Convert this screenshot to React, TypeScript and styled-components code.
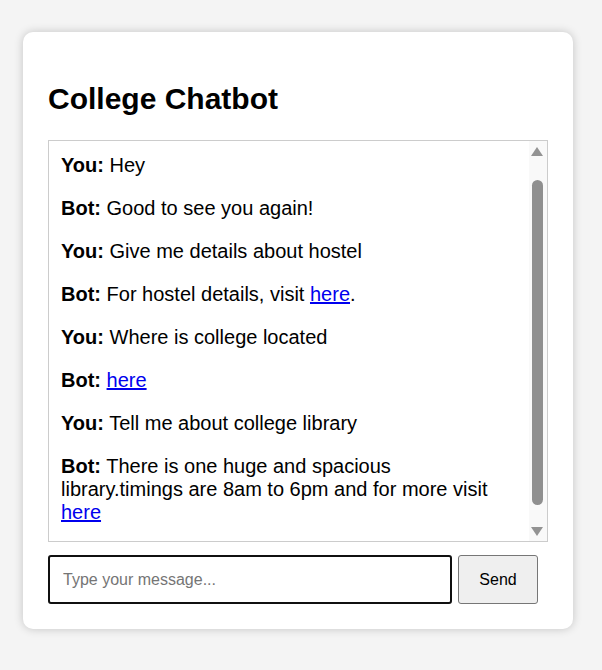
import React, { useLayoutEffect, useRef } from "react";
import styled, { createGlobalStyle } from "styled-components";

const GlobalStyle = createGlobalStyle`
  html, body {
    margin: 0;
    padding: 0;
    background: #f4f4f4;
    font-family: "Liberation Sans", Arial, sans-serif;
  }
`;

const Page = styled.div`
  min-height: 670px;
  padding-top: 32px;
  box-sizing: border-box;
`;

const Card = styled.div`
  width: 550px;
  box-sizing: border-box;
  margin-left: 23px;
  padding: 25px;
  background: #fff;
  border-radius: 10px;
  box-shadow: 0 0 10px rgba(0, 0, 0, 0.2);
`;

const Title = styled.h2`
  margin: 25px 0 24px;
  font-size: 30px;
  line-height: 34px;
  font-weight: bold;
  color: #000;
`;

const ChatBox = styled.div`
  display: flex;
  height: 402px;
  box-sizing: border-box;
  border: 1px solid #ccc;
  margin-bottom: 13px;
`;

const MessageList = styled.div`
  flex: 1;
  overflow: hidden;
  padding: 10px 12px 10px 12px;
  font-size: 20px;
  color: #000;
`;

const Message = styled.p`
  margin: 20px 0;
  line-height: 23px;

  a {
    color: #0000ee;
  }
`;

const ScrollBar = styled.div`
  width: 18px;
  display: flex;
  flex-direction: column;
  background: #f9f9f9;
`;

const Arrow = styled.div<{ $down?: boolean }>`
  height: 20px;
  display: flex;
  align-items: center;
  padding-left: 2px;

  &::before {
    content: "";
    width: 0;
    height: 0;
    border-left: 6.5px solid transparent;
    border-right: 6.5px solid transparent;
    ${(p) =>
      p.$down
        ? "border-top: 9px solid #939393;"
        : "border-bottom: 9px solid #939393;"}
  }
`;

const Track = styled.div`
  flex: 1;
  padding-left: 3px;
`;

const Thumb = styled.div`
  width: 11px;
  height: 325px;
  margin-top: 19px;
  background: #8f8f8f;
  border-radius: 6px;
`;

const InputRow = styled.div`
  display: flex;
  gap: 6px;
`;

const TextInput = styled.input`
  width: 404px;
  height: 49px;
  box-sizing: border-box;
  border: 2px solid #101010;
  border-radius: 3px;
  padding: 0 13px;
  font-family: "Liberation Sans", Arial, sans-serif;
  font-size: 16px;
  outline: none;
  caret-color: #000;

  &::placeholder {
    color: #757575;
  }
`;

const SendButton = styled.button`
  width: 80px;
  height: 49px;
  box-sizing: border-box;
  background: #efefef;
  border: 1px solid #767676;
  border-radius: 3px;
  font-family: "Liberation Sans", Arial, sans-serif;
  font-size: 16px;
  color: #000;
`;

type Msg = { who: "You" | "Bot"; text: string; link?: boolean; linkOnly?: boolean; dot?: boolean };

const messages: Msg[] = [
  { who: "You", text: "Hey" },
  { who: "Bot", text: "Good to see you again!" },
  { who: "You", text: "Give me details about hostel" },
  { who: "Bot", text: "For hostel details, visit ", link: true, dot: true },
  { who: "You", text: "Where is college located" },
  { who: "Bot", text: "", linkOnly: true },
  { who: "You", text: "Tell me about college library" },
  {
    who: "Bot",
    text: "There is one huge and spacious library.timings are 8am to 6pm and for more visit ",
    link: true,
  },
];

export default function App() {
  const listRef = useRef<HTMLDivElement>(null);

  useLayoutEffect(() => {
    if (listRef.current) listRef.current.scrollTop = 17;
  }, []);

  return (
    <Page>
      <GlobalStyle />
      <Card>
        <Title>College Chatbot</Title>
        <ChatBox>
          <MessageList ref={listRef}>
            {messages.map((m, i) => (
              <Message key={i}>
                <strong>{m.who}:</strong>{" "}
                {m.linkOnly ? (
                  <a href="#">here</a>
                ) : (
                  <>
                    {m.text}
                    {m.link && <a href="#">here</a>}
                    {m.dot && "."}
                  </>
                )}
              </Message>
            ))}
          </MessageList>
          <ScrollBar>
            <Arrow />
            <Track>
              <Thumb />
            </Track>
            <Arrow $down />
          </ScrollBar>
        </ChatBox>
        <InputRow>
          <TextInput placeholder="Type your message..." autoFocus />
          <SendButton>Send</SendButton>
        </InputRow>
      </Card>
    </Page>
  );
}
